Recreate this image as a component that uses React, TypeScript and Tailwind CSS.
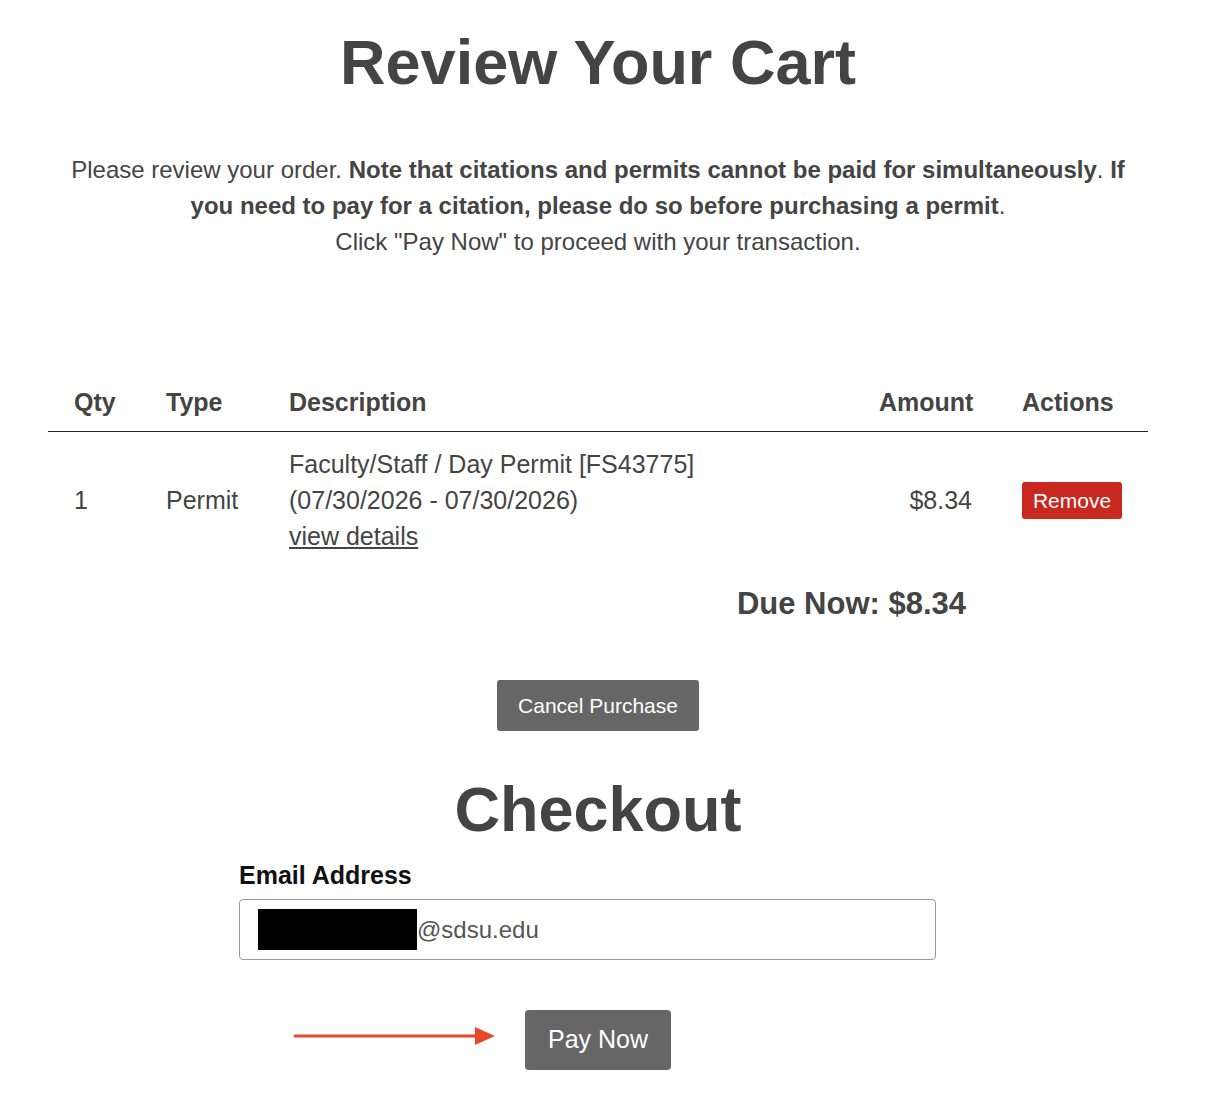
const font = { fontFamily: '"Liberation Sans", Arial, Helvetica, sans-serif' };

function Arrow() {
  return (
    <svg width="204" height="24" viewBox="0 0 204 24" className="absolute left-[293px] top-[14px]">
      <line x1="2" y1="12" x2="186" y2="12" stroke="#e8472b" strokeWidth="3" strokeLinecap="round" />
      <polygon points="182,3 202,12 182,21" fill="#e8472b" />
    </svg>
  );
}

export default function App() {
  return (
    <div style={font} className="min-h-[1112px] w-[1222px] bg-white text-[#444]">
      <div className="ml-[48px] w-[1100px]">
        <h1 className="pt-[26px] text-center text-[63px] font-bold leading-[72px]">Review Your Cart</h1>

        <p className="mx-auto mt-[54px] w-[1060px] text-center text-[24px] leading-[36px]">
          Please review your order. <b>Note that citations and permits cannot be paid for simultaneously</b>.{" "}
          <b>If you need to pay for a citation, please do so before purchasing a permit</b>.
          <br />
          Click "Pay Now" to proceed with your transaction.
        </p>

        {/* cart table */}
        <div className="mt-[124px]">
          <div className="grid grid-cols-[93px_123px_1fr_143px_151px] border-b border-[#222] pb-[11px] text-[25px] font-bold leading-[36px]">
            <div className="px-[26px]">Qty</div>
            <div className="px-[25px]">Type</div>
            <div className="px-[25px]">Description</div>
            <div className="px-[25px] text-right">Amount</div>
            <div className="px-[25px]">Actions</div>
          </div>
          <div className="grid grid-cols-[93px_123px_1fr_143px_151px] items-center py-[14px] text-[25px] leading-[36px]">
            <div className="px-[26px]">1</div>
            <div className="px-[25px]">Permit</div>
            <div className="px-[25px]">
              <div>Faculty/Staff / Day Permit [FS43775]</div>
              <div>(07/30/2026 - 07/30/2026)</div>
              <a href="#" className="underline">view details</a>
            </div>
            <div className="px-[25px] text-right">$8.34</div>
            <div className="px-[25px]">
              <button className="h-[37px] w-[100px] rounded-[3px] bg-[#c8281f] text-[21px] text-white">Remove</button>
            </div>
          </div>
          <div className="mt-[16px] pr-[182px] text-right text-[31px] font-bold leading-[40px]">Due Now: $8.34</div>
        </div>

        <div className="mt-[56px] flex justify-center">
          <button className="h-[51px] w-[202px] rounded-[3px] bg-[#666] text-[21px] text-white">Cancel Purchase</button>
        </div>

        <h2 className="mt-[42px] text-center text-[63px] font-bold leading-[72px]">Checkout</h2>
      </div>

      {/* checkout form */}
      <div className="ml-[239px] mt-[14px] w-[697px]">
        <label className="block text-[25px] font-bold leading-[32px] text-[#111]">Email Address</label>
        <div className="mt-[8px] flex h-[61px] items-center rounded-[4px] border border-[#999] pl-[18px] text-[24px] text-[#555]">
          <span className="inline-block h-[41px] w-[159px] bg-black" />
          <span>@sdsu.edu</span>
        </div>
      </div>

      <div className="relative mt-[50px] w-[1222px]">
        <Arrow />
        <div className="flex justify-center pr-[26px]">
          <button className="h-[60px] w-[146px] rounded-[4px] bg-[#666] text-[25px] text-white">Pay Now</button>
        </div>
      </div>
    </div>
  );
}
